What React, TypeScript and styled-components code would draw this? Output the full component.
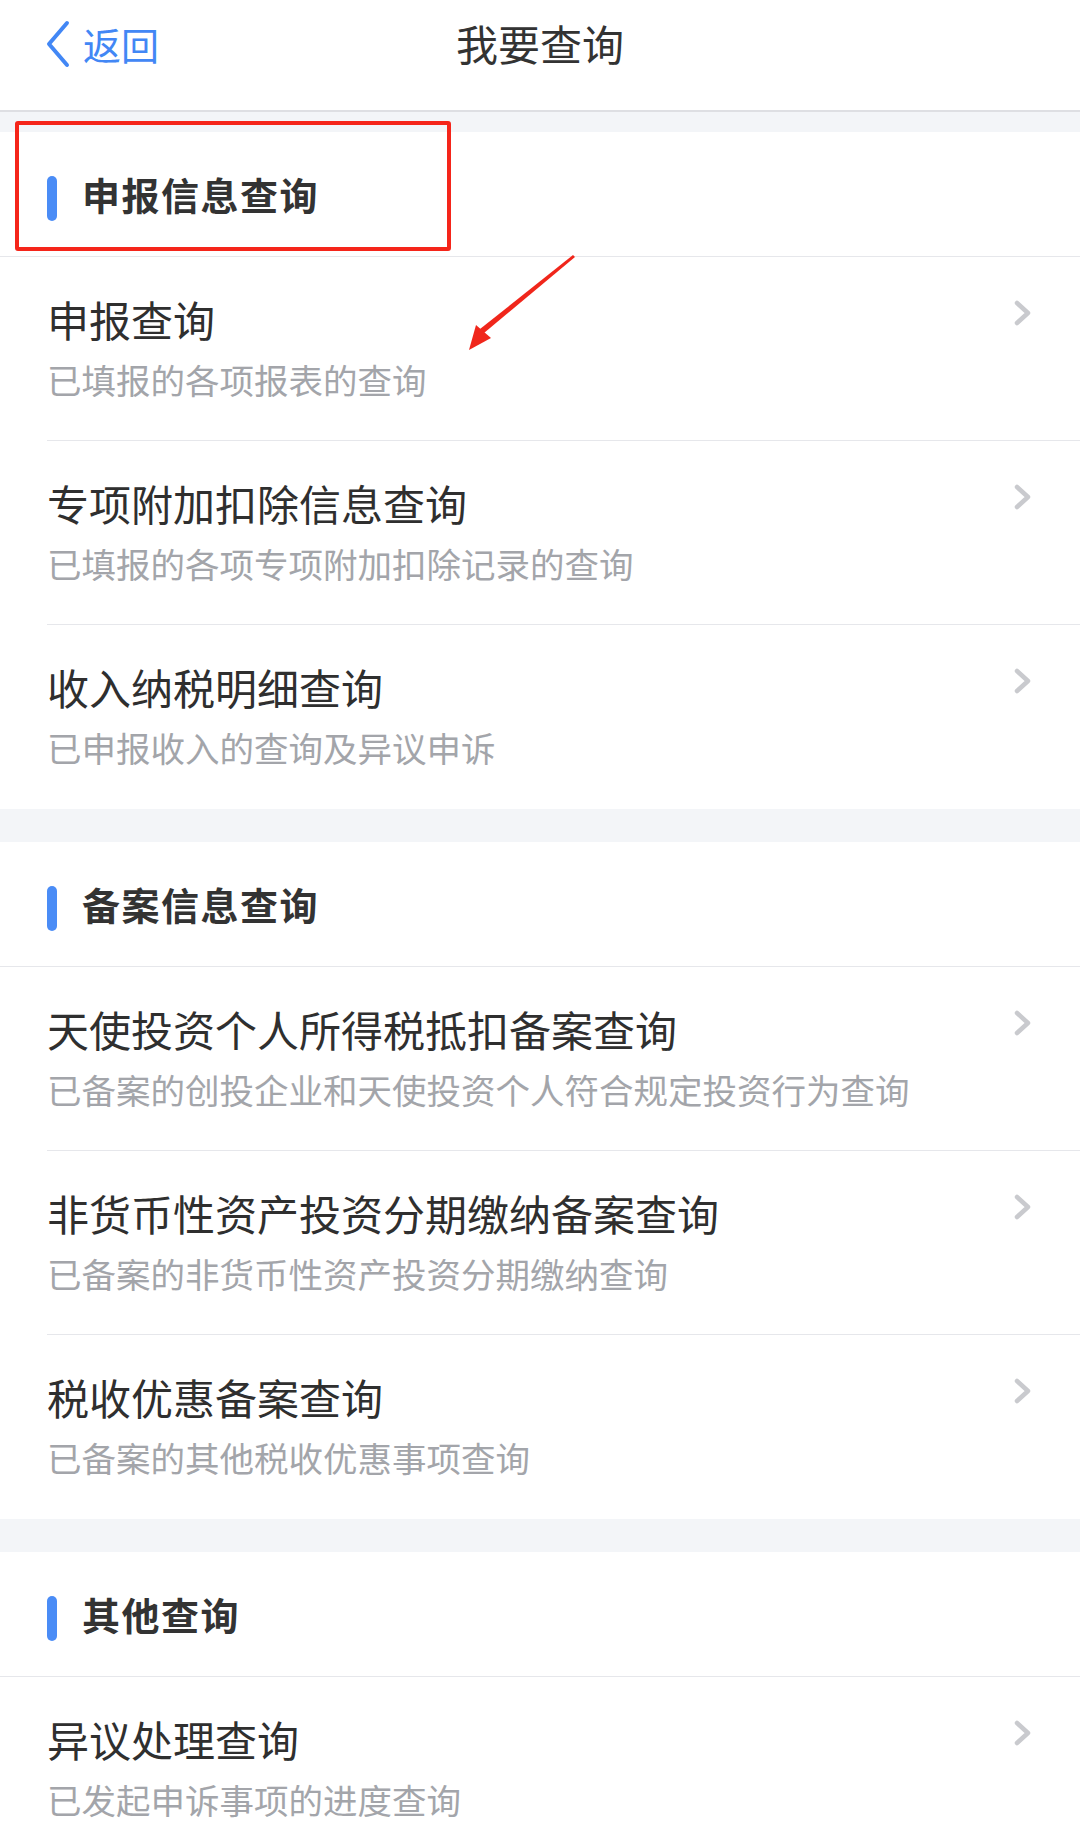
import React from "react";
import styled, { createGlobalStyle } from "styled-components";

const GlobalStyle = createGlobalStyle`
  html, body {
    margin: 0;
    padding: 0;
    background: #ffffff;
  }
  body {
    font-family: "Noto Sans CJK SC", "Noto Sans", sans-serif;
    -webkit-font-smoothing: antialiased;
  }
`;

const Page = styled.div`
  position: relative;
  width: 1080px;
  min-height: 1839px;
  background: #f3f5f8;
  overflow: hidden;
`;

const NavBar = styled.header`
  height: 112px;
  box-sizing: border-box;
  background: #ffffff;
  border-bottom: 2px solid #dedfe3;
  display: grid;
  grid-template-columns: 1fr auto 1fr;
  align-items: center;
  padding: 0 45px;
`;

const BackButton = styled.div`
  display: flex;
  align-items: center;
  gap: 12px;
  color: #4287f5;
  font-size: 38px;
  line-height: 46px;
  margin-top: -22px;
`;

const NavTitle = styled.h1`
  margin: -24px 0 0;
  font-size: 42px;
  font-weight: 400;
  color: #333333;
  line-height: 50px;
`;

const Section = styled.section<{ $gap: number }>`
  margin-top: ${(p) => p.$gap}px;
  background: #ffffff;
`;

const SectionHeader = styled.div`
  height: 125px;
  box-sizing: border-box;
  border-bottom: 1px solid #e6e7eb;
  display: flex;
  align-items: center;
  gap: 25px;
  padding: 0 0 0 47px;
`;

const Bar = styled.span`
  width: 10px;
  height: 45px;
  border-radius: 5px;
  background: #4a8cf6;
  margin-top: 8px;
`;

const SectionTitle = styled.h2`
  margin: 0;
  font-size: 38px;
  font-weight: 600;
  letter-spacing: 1.5px;
  color: #333333;
  line-height: 50px;
`;

const Row = styled.div<{ $last?: boolean }>`
  height: 184px;
  box-sizing: border-box;
  margin-left: 47px;
  padding-right: 47px;
  border-bottom: ${(p) => (p.$last ? "none" : "1.5px solid #e6e7eb")};
  display: flex;
  align-items: flex-start;
  justify-content: space-between;
`;

const RowText = styled.div`
  display: flex;
  flex-direction: column;
  padding-top: 37px;
`;

const RowTitle = styled.div`
  font-size: 42px;
  line-height: 50px;
  color: #2f2f2f;
`;

const RowSub = styled.div`
  margin-top: 14px;
  font-size: 34.5px;
  line-height: 42px;
  color: #a3a5aa;
`;

const Chevron = styled.svg`
  margin-top: 43px;
  flex: none;
`;

const Annotation = styled.div`
  position: absolute;
  left: 15px;
  top: 121px;
  width: 436px;
  height: 130px;
  box-sizing: border-box;
  border: 4px solid #f5251a;
  border-radius: 3px;
  pointer-events: none;
`;

const ArrowLayer = styled.svg`
  position: absolute;
  left: 0;
  top: 0;
  pointer-events: none;
`;

type Item = { title: string; sub: string };

const sections: { title: string; gap: number; items: Item[] }[] = [
  {
    title: "申报信息查询",
    gap: 20,
    items: [
      { title: "申报查询", sub: "已填报的各项报表的查询" },
      { title: "专项附加扣除信息查询", sub: "已填报的各项专项附加扣除记录的查询" },
      { title: "收入纳税明细查询", sub: "已申报收入的查询及异议申诉" },
    ],
  },
  {
    title: "备案信息查询",
    gap: 33,
    items: [
      { title: "天使投资个人所得税抵扣备案查询", sub: "已备案的创投企业和天使投资个人符合规定投资行为查询" },
      { title: "非货币性资产投资分期缴纳备案查询", sub: "已备案的非货币性资产投资分期缴纳查询" },
      { title: "税收优惠备案查询", sub: "已备案的其他税收优惠事项查询" },
    ],
  },
  {
    title: "其他查询",
    gap: 33,
    items: [{ title: "异议处理查询", sub: "已发起申诉事项的进度查询" }],
  },
];

const RightArrow = () => (
  <Chevron width="20" height="26" viewBox="0 0 20 26">
    <polyline
      points="4,3 15,13 4,23"
      fill="none"
      stroke="#c9cace"
      strokeWidth="4.5"
      strokeLinecap="round"
      strokeLinejoin="round"
    />
  </Chevron>
);

export default function App() {
  return (
    <>
      <GlobalStyle />
      <Page>
        <NavBar>
          <BackButton>
            <svg width="26" height="48" viewBox="0 0 26 48">
              <polyline
                points="22,3 4,24 22,45"
                fill="none"
                stroke="#4287f5"
                strokeWidth="4"
                strokeLinecap="round"
                strokeLinejoin="round"
              />
            </svg>
            <span>返回</span>
          </BackButton>
          <NavTitle>我要查询</NavTitle>
          <span />
        </NavBar>
        {sections.map((s) => (
          <Section key={s.title} $gap={s.gap}>
            <SectionHeader>
              <Bar />
              <SectionTitle>{s.title}</SectionTitle>
            </SectionHeader>
            {s.items.map((it, i) => (
              <Row key={it.title} $last={i === s.items.length - 1 && s.items.length > 1}>
                <RowText>
                  <RowTitle>{it.title}</RowTitle>
                  <RowSub>{it.sub}</RowSub>
                </RowText>
                <RightArrow />
              </Row>
            ))}
          </Section>
        ))}
        <Annotation />
        <ArrowLayer width="1080" height="1839" viewBox="0 0 1080 1839">
          <polygon points="573,255 575,257 484,333 480,329" fill="#f0261b" />
          <polygon points="469,350 476,325 491,338" fill="#f0261b" />
        </ArrowLayer>
      </Page>
    </>
  );
}
